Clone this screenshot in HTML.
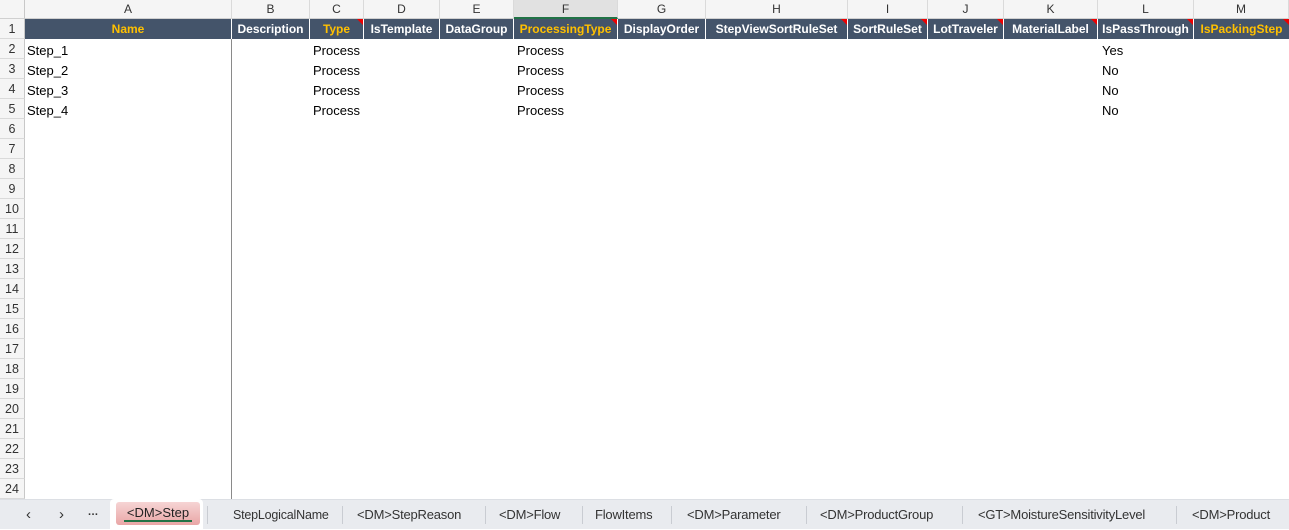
<!DOCTYPE html><html><head><meta charset="utf-8"><style>
*{margin:0;padding:0;box-sizing:border-box}
body{width:1289px;height:529px;overflow:hidden;background:#fff;font-family:"Liberation Sans",sans-serif;position:relative}
.a{position:absolute;white-space:nowrap}
.ch{top:0;height:19px;background:#f5f5f5;border-right:1px solid #dadada;border-bottom:1px solid #d0d0d0;font-size:12px;color:#333;text-align:center;line-height:19px}
.h{top:19px;height:20px;background:#44546a;border-right:1px solid #fff;color:#fff;font-weight:bold;font-size:12px;line-height:20px;text-align:center;overflow:hidden}
.y{color:#ffc000}
.tri{position:absolute;right:0;top:0;width:0;height:0;border-left:6px solid transparent;border-top:6px solid #e00}
.rh{left:0;width:25px;height:20px;background:#f5f5f5;border-right:1px solid #c8c8c8;border-bottom:1px solid #dadada;font-size:12.5px;color:#333;text-align:center;line-height:21px}
.d{font-size:13px;color:#000;line-height:20px}
.tab{top:500px;font-size:13px;color:#333;line-height:30px;letter-spacing:-0.2px}
.sep{top:506px;width:1px;height:18px;background:#c9ccd2}
</style></head><body>
<div class="a" style="left:0;top:0;width:25px;height:19px;background:#f5f5f5;border-right:1px solid #c8c8c8;border-bottom:1px solid #d0d0d0"></div>
<div class="a ch" style="left:25px;width:207px">A</div>
<div class="a ch" style="left:232px;width:78px">B</div>
<div class="a ch" style="left:310px;width:54px">C</div>
<div class="a ch" style="left:364px;width:76px">D</div>
<div class="a ch" style="left:440px;width:74px">E</div>
<div class="a ch" style="left:514px;width:104px;background:#e1e1e1;border-bottom:2px solid #217346">F</div>
<div class="a ch" style="left:618px;width:88px">G</div>
<div class="a ch" style="left:706px;width:142px">H</div>
<div class="a ch" style="left:848px;width:80px">I</div>
<div class="a ch" style="left:928px;width:76px">J</div>
<div class="a ch" style="left:1004px;width:94px">K</div>
<div class="a ch" style="left:1098px;width:96px">L</div>
<div class="a ch" style="left:1194px;width:95px">M</div>

<div class="a h y" style="left:25px;width:207px">Name</div>
<div class="a h" style="left:232px;width:78px">Description</div>
<div class="a h y" style="left:310px;width:54px">Type<span class="tri"></span></div>
<div class="a h" style="left:364px;width:76px">IsTemplate</div>
<div class="a h" style="left:440px;width:74px">DataGroup</div>
<div class="a h y" style="left:514px;width:104px">ProcessingType<span class="tri"></span></div>
<div class="a h" style="left:618px;width:88px">DisplayOrder</div>
<div class="a h" style="left:706px;width:142px">StepViewSortRuleSet<span class="tri"></span></div>
<div class="a h" style="left:848px;width:80px">SortRuleSet<span class="tri"></span></div>
<div class="a h" style="left:928px;width:76px">LotTraveler<span class="tri"></span></div>
<div class="a h" style="left:1004px;width:94px">MaterialLabel<span class="tri"></span></div>
<div class="a h" style="left:1098px;width:96px">IsPassThrough<span class="tri"></span></div>
<div class="a h y" style="left:1194px;width:95px;border-right:0">IsPackingStep<span class="tri"></span></div>

<div class="a" style="left:231px;top:39px;width:1px;height:460px;background:#8a8a8a"></div>

<div class="a rh" style="top:19px">1</div><div class="a rh" style="top:39px">2</div><div class="a rh" style="top:59px">3</div><div class="a rh" style="top:79px">4</div><div class="a rh" style="top:99px">5</div><div class="a rh" style="top:119px">6</div><div class="a rh" style="top:139px">7</div><div class="a rh" style="top:159px">8</div><div class="a rh" style="top:179px">9</div><div class="a rh" style="top:199px">10</div><div class="a rh" style="top:219px">11</div><div class="a rh" style="top:239px">12</div><div class="a rh" style="top:259px">13</div><div class="a rh" style="top:279px">14</div><div class="a rh" style="top:299px">15</div><div class="a rh" style="top:319px">16</div><div class="a rh" style="top:339px">17</div><div class="a rh" style="top:359px">18</div><div class="a rh" style="top:379px">19</div><div class="a rh" style="top:399px">20</div><div class="a rh" style="top:419px">21</div><div class="a rh" style="top:439px">22</div><div class="a rh" style="top:459px">23</div><div class="a rh" style="top:479px">24</div>

<div class="a d" style="left:27px;top:41px">Step_1</div><div class="a d" style="left:313px;top:41px">Process</div><div class="a d" style="left:517px;top:41px">Process</div><div class="a d" style="left:1102px;top:41px">Yes</div>
<div class="a d" style="left:27px;top:61px">Step_2</div><div class="a d" style="left:313px;top:61px">Process</div><div class="a d" style="left:517px;top:61px">Process</div><div class="a d" style="left:1102px;top:61px">No</div>
<div class="a d" style="left:27px;top:81px">Step_3</div><div class="a d" style="left:313px;top:81px">Process</div><div class="a d" style="left:517px;top:81px">Process</div><div class="a d" style="left:1102px;top:81px">No</div>
<div class="a d" style="left:27px;top:101px">Step_4</div><div class="a d" style="left:313px;top:101px">Process</div><div class="a d" style="left:517px;top:101px">Process</div><div class="a d" style="left:1102px;top:101px">No</div>

<div class="a" style="left:0;top:499px;width:1289px;height:30px;background:#e9ebef;border-top:1px solid #dcdfe4"></div>
<div class="a tab" style="left:26px;font-size:15px">&#8249;</div>
<div class="a tab" style="left:59px;font-size:15px">&#8250;</div>
<div class="a tab" style="left:88px;font-size:11px;font-weight:bold">&middot;&middot;&middot;</div>
<div class="a" style="left:110px;top:499px;width:93px;height:30px;background:#fff;border-radius:4px 4px 0 0"></div>
<div class="a" style="left:116px;top:502px;width:84px;height:23px;background:linear-gradient(#f6d4d4,#e9a6a6);border-radius:3px"></div>
<div class="a" style="left:124px;top:520px;width:68px;height:2px;background:#217346"></div>
<div class="a" style="left:116px;top:502px;width:84px;line-height:21px;text-align:center;font-size:13px;color:#222">&lt;DM&gt;Step</div>
<div class="a sep" style="left:207px"></div>
<div class="a tab" style="left:233px;font-size:12.5px">StepLogicalName</div>
<div class="a sep" style="left:342px"></div>
<div class="a tab" style="left:357px">&lt;DM&gt;StepReason</div>
<div class="a sep" style="left:485px"></div>
<div class="a tab" style="left:499px">&lt;DM&gt;Flow</div>
<div class="a sep" style="left:582px"></div>
<div class="a tab" style="left:595px">FlowItems</div>
<div class="a sep" style="left:671px"></div>
<div class="a tab" style="left:687px">&lt;DM&gt;Parameter</div>
<div class="a sep" style="left:806px"></div>
<div class="a tab" style="left:820px">&lt;DM&gt;ProductGroup</div>
<div class="a sep" style="left:962px"></div>
<div class="a tab" style="left:978px">&lt;GT&gt;MoistureSensitivityLevel</div>
<div class="a sep" style="left:1176px"></div>
<div class="a tab" style="left:1192px">&lt;DM&gt;Product</div>
</body></html>
